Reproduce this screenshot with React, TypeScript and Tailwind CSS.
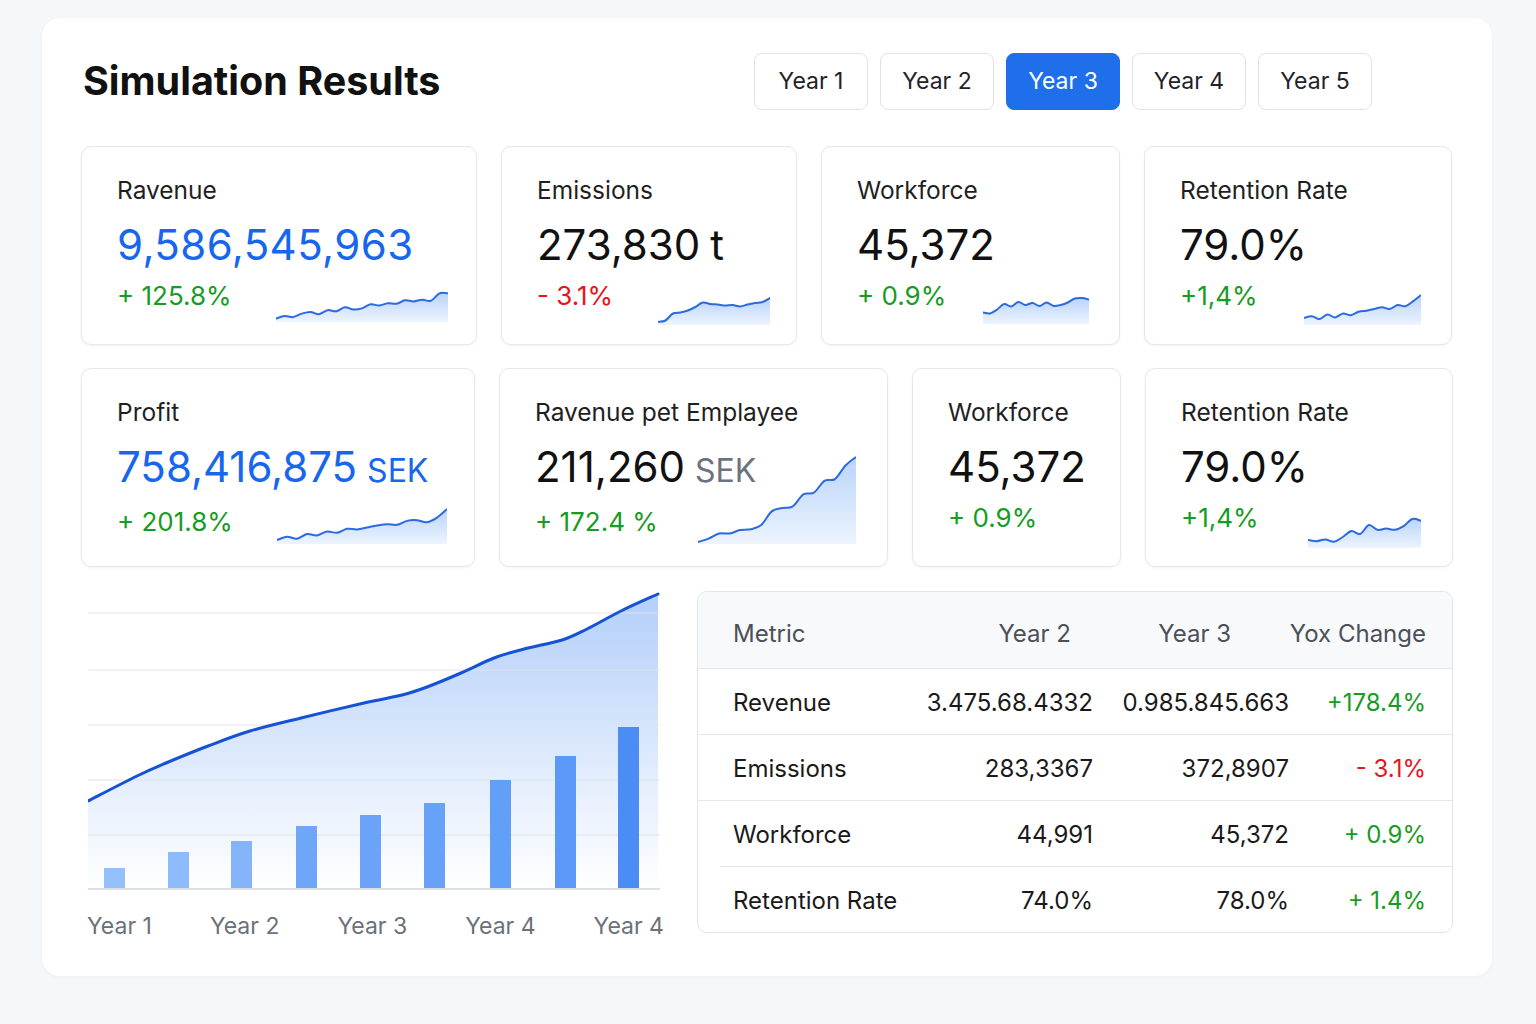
import { useId } from "react";

type Spark = {
  ys: number[];
  w: number;
  h: number;
  pos: string;
};

type Metric = {
  label: string;
  value: string;
  unit?: string;
  valueClass: string;
  unitClass?: string;
  change: string;
  up: boolean;
  spark?: Spark;
};

function smooth(points: [number, number][]) {
  let d = `M${points[0][0]},${points[0][1]}`;
  for (let i = 0; i < points.length - 1; i++) {
    const p0 = points[i - 1] || points[i];
    const p1 = points[i];
    const p2 = points[i + 1];
    const p3 = points[i + 2] || p2;
    const c1x = p1[0] + (p2[0] - p0[0]) / 6;
    const c1y = p1[1] + (p2[1] - p0[1]) / 6;
    const c2x = p2[0] - (p3[0] - p1[0]) / 6;
    const c2y = p2[1] - (p3[1] - p1[1]) / 6;
    d += ` C${c1x},${c1y} ${c2x},${c2y} ${p2[0]},${p2[1]}`;
  }
  return d;
}

function Sparkline({ ys, w, h, pos }: Spark) {
  const id = useId();
  const pad = 2;
  const pts: [number, number][] = ys.map((y, i) => [
    (i / (ys.length - 1)) * w,
    pad + y * (h - pad * 2),
  ]);
  const line = smooth(pts);
  return (
    <svg width={w} height={h} className={`absolute ${pos}`} viewBox={`0 0 ${w} ${h}`}>
      <defs>
        <linearGradient id={id} x1="0" y1="0" x2="0" y2="1">
          <stop offset="0%" stopColor="#b9d4fb" />
          <stop offset="100%" stopColor="#edf4fe" />
        </linearGradient>
      </defs>
      <path d={`${line} L${w},${h} L0,${h} Z`} fill={`url(#${id})`} />
      <path d={line} fill="none" stroke="#2c6ae0" strokeWidth="2" strokeLinejoin="round" />
    </svg>
  );
}

const row1: Metric[] = [
  {
    label: "Ravenue",
    value: "9,586,545,963",
    valueClass: "text-[#1766ee] tracking-[0.01em]",
    change: "+ 125.8%",
    up: true,
    spark: {
      w: 172,
      h: 33,
      pos: "right-[28px] bottom-[22px]",
      ys: [0.95, 0.86, 0.9, 0.78, 0.72, 0.8, 0.66, 0.7, 0.56, 0.64, 0.6, 0.46, 0.5, 0.42, 0.44, 0.32, 0.36, 0.3, 0.34, 0.08, 0.08],
    },
  },
  {
    label: "Emissions",
    value: "273,830",
    unit: "t",
    valueClass: "text-[#111]",
    unitClass: "text-[#111] text-[42px]",
    change: "- 3.1%",
    up: false,
    spark: {
      w: 112,
      h: 29,
      pos: "right-[26px] bottom-[19px]",
      ys: [0.95, 0.9, 0.62, 0.58, 0.5, 0.36, 0.18, 0.24, 0.26, 0.3, 0.28, 0.34, 0.26, 0.2, 0.16, 0.0],
    },
  },
  {
    label: "Workforce",
    value: "45,372",
    valueClass: "text-[#111]",
    change: "+ 0.9%",
    up: true,
    spark: {
      w: 106,
      h: 29,
      pos: "right-[30px] bottom-[20px]",
      ys: [0.62, 0.66, 0.5, 0.28, 0.38, 0.2, 0.32, 0.24, 0.36, 0.22, 0.36, 0.32, 0.22, 0.06, 0.04, 0.1],
    },
  },
  {
    label: "Retention Rate",
    value: "79.0%",
    valueClass: "text-[#111]",
    change: "+1,4%",
    up: true,
    spark: {
      w: 117,
      h: 32,
      pos: "right-[30px] bottom-[19px]",
      ys: [0.82, 0.76, 0.86, 0.7, 0.8, 0.66, 0.72, 0.6, 0.56, 0.5, 0.44, 0.5, 0.36, 0.4, 0.22, 0.0],
    },
  },
];

const row2: Metric[] = [
  {
    label: "Profit",
    value: "758,416,875",
    unit: "SEK",
    valueClass: "text-[#1766ee]",
    unitClass: "text-[#1766ee] text-[32px]",
    change: "+ 201.8%",
    up: true,
    spark: {
      w: 170,
      h: 37,
      pos: "right-[27px] bottom-[22px]",
      ys: [0.94, 0.84, 0.9, 0.76, 0.8, 0.68, 0.72, 0.6, 0.62, 0.56, 0.5, 0.46, 0.48, 0.36, 0.34, 0.4, 0.26, 0.0],
    },
  },
  {
    label: "Ravenue pet Emplayee",
    value: "211,260",
    unit: "SEK",
    valueClass: "text-[#111]",
    unitClass: "text-[#6b7280] text-[32px]",
    change: "+ 172.4 %",
    up: true,
    spark: {
      w: 158,
      h: 89,
      pos: "right-[31px] bottom-[22px]",
      ys: [1.0, 0.96, 0.9, 0.9, 0.86, 0.85, 0.8, 0.64, 0.6, 0.58, 0.44, 0.42, 0.28, 0.26, 0.1, 0.0],
    },
  },
  {
    label: "Workforce",
    value: "45,372",
    valueClass: "text-[#111]",
    change: "+ 0.9%",
    up: true,
  },
  {
    label: "Retention Rate",
    value: "79.0%",
    valueClass: "text-[#111]",
    change: "+1,4%",
    up: true,
    spark: {
      w: 113,
      h: 34,
      pos: "right-[31px] bottom-[18px]",
      ys: [0.8, 0.84, 0.78, 0.86, 0.7, 0.5, 0.6, 0.3, 0.46, 0.42, 0.46, 0.34, 0.1, 0.16],
    },
  },
];

function MetricCard({ m }: { m: Metric }) {
  return (
    <div className="relative h-[199px] rounded-[10px] border border-[#e4e7eb] bg-white pl-[35px] pt-[29px] shadow-[0_1px_3px_rgba(15,23,42,0.05)]">
      <div className="text-[24.5px] leading-[28px] text-[#1f1f1f]">{m.label}</div>
      <div className="mt-[20px] flex items-baseline gap-[10px] leading-[42px]">
        <span className={`text-[42px] ${m.valueClass}`}>{m.value}</span>
        {m.unit && <span className={m.unitClass}>{m.unit}</span>}
      </div>
      <div className={`mt-[14px] text-[26px] leading-[32px] ${m.up ? "text-[#169b23]" : "text-[#e8141c]"}`}>
        {m.change}
      </div>
      {m.spark && <Sparkline {...m.spark} />}
    </div>
  );
}

const linePts: [number, number][] = [
  [0, 210], [49, 185], [78, 172], [120, 155], [162, 140], [213, 127], [276, 112], [314, 104],
  [339, 96], [373, 82], [406, 67], [436, 58], [474, 49], [499, 38], [533, 20], [570, 3],
];

const bars = [
  { x: 16, top: 277, c: "#93c0fb" },
  { x: 80, top: 261, c: "#8dbafa" },
  { x: 143, top: 250, c: "#85b4fa" },
  { x: 208, top: 235, c: "#6ea6f8" },
  { x: 272, top: 224, c: "#6aa3f8" },
  { x: 336, top: 212, c: "#67a1f8" },
  { x: 402, top: 189, c: "#62a0f8" },
  { x: 467, top: 165, c: "#5b98f7" },
  { x: 530, top: 136, c: "#4b8cf5" },
];

function GrowthChart() {
  const line = smooth(linePts);
  return (
    <div>
      <svg width={572} height={302} viewBox="0 0 572 302" className="ml-[7px]">
        <defs>
          <linearGradient id="chartFill" x1="0" y1="0" x2="0" y2="1">
            <stop offset="0%" stopColor="#b3cffa" />
            <stop offset="60%" stopColor="#e1ecfd" />
            <stop offset="100%" stopColor="#ffffff" />
          </linearGradient>
        </defs>
        <path d={`${line} L570,298 L0,298 Z`} fill="url(#chartFill)" />
        {[22, 79, 134, 189, 244].map((y) => (
          <line key={y} x1="0" x2="572" y1={y} y2={y} stroke="#dfe2e7" strokeWidth="1" />
        ))}
        <line x1="0" x2="572" y1="298" y2="298" stroke="#dcdfe4" strokeWidth="2" />
        {bars.map((b) => (
          <rect key={b.x} x={b.x} y={b.top} width={21} height={297 - b.top} fill={b.c} />
        ))}
        <path d={line} fill="none" stroke="#1552d4" strokeWidth="3" strokeLinecap="round" />
      </svg>
      <div className="ml-[6px] mt-[19px] flex w-[577px] justify-between text-[23px] leading-[28px] text-[#6b7079]">
        <span>Year 1</span>
        <span>Year 2</span>
        <span>Year 3</span>
        <span>Year 4</span>
        <span>Year 4</span>
      </div>
    </div>
  );
}

const tableRows = [
  { name: "Revenue", y2: "3.475.68.4332", y3: "0.985.845.663", ch: "+178.4%", up: true },
  { name: "Emissions", y2: "283,3367", y3: "372,8907", ch: "- 3.1%", up: false },
  { name: "Workforce", y2: "44,991", y3: "45,372", ch: "+ 0.9%", up: true },
  { name: "Retention Rate", y2: "74.0%", y3: "78.0%", ch: "+ 1.4%", up: true },
];

function CompareTable() {
  return (
    <div className="self-start overflow-hidden rounded-[10px] border border-[#e2e5e9] bg-white">
      <div className="grid h-[77px] grid-cols-[190px_170px_196px_137px] items-center border-b border-[#e5e7eb] bg-[#f8f9fb] pl-[35px] pt-[8px] text-[24px] text-[#4b5059]">
        <span>Metric</span>
        <span className="pr-[22px] text-right">Year 2</span>
        <span className="pr-[58px] text-right">Year 3</span>
        <span className="whitespace-nowrap text-right">Yox Change</span>
      </div>
      {tableRows.map((r, i) => (
        <div key={r.name}>
          {i > 0 && <div className={`h-px bg-[#e5e7eb] ${i === 3 ? "ml-[22px]" : ""}`} />}
          <div className="grid h-[65px] grid-cols-[190px_170px_196px_137px] items-center pl-[35px] pt-[3px] text-[24px] text-[#1a1a1a]">
            <span className="whitespace-nowrap">{r.name}</span>
            <span className="whitespace-nowrap text-right">{r.y2}</span>
            <span className="whitespace-nowrap text-right">{r.y3}</span>
            <span className={`whitespace-nowrap text-right ${r.up ? "text-[#169b23]" : "text-[#e8141c]"}`}>{r.ch}</span>
          </div>
        </div>
      ))}
    </div>
  );
}

export default function App() {
  const years = ["Year 1", "Year 2", "Year 3", "Year 4", "Year 5"];
  return (
    <div className="min-h-screen bg-[#f6f7f9] pt-[18px] font-['Inter',sans-serif]">
      <div className="ml-[42px] h-[958px] w-[1450px] rounded-[18px] bg-white px-[39px] pt-[35px] shadow-[0_1px_4px_rgba(15,23,42,0.04)]">
        <div className="flex h-[57px] items-center">
          <h1 className="ml-[2px] text-[39.5px] font-bold text-[#111]">Simulation Results</h1>
          <div className="ml-auto mr-[81px] flex gap-[12px]">
            {years.map((y) => (
              <button
                key={y}
                className={`h-[57px] w-[114px] rounded-[8px] border text-[23px] ${
                  y === "Year 3"
                    ? "border-[#1f6fea] bg-[#1f6fea] text-white"
                    : "border-[#dfe2e7] bg-white text-[#1f2329]"
                }`}
              >
                {y}
              </button>
            ))}
          </div>
        </div>

        <div className="mt-[36px] grid grid-cols-[396px_296px_299px_308px] gap-x-[24px]">
          {row1.map((m) => (
            <MetricCard key={m.label} m={m} />
          ))}
        </div>

        <div className="mt-[23px] grid grid-cols-[394px_389px_209px_308px] gap-x-[24px]">
          {row2.map((m) => (
            <MetricCard key={m.label} m={m} />
          ))}
        </div>

        <div className="mt-[24px] grid grid-cols-[592px_756px] gap-x-[24px]">
          <GrowthChart />
          <CompareTable />
        </div>
      </div>
    </div>
  );
}
